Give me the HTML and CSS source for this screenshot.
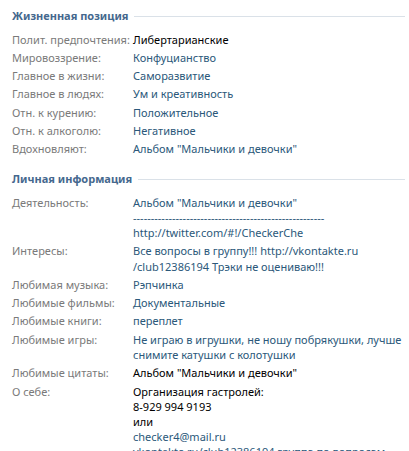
FILE: index.html
```html
<!DOCTYPE html>
<html lang="ru">
<head>
<meta charset="utf-8">
<link rel="stylesheet" href="styles.css">
</head>
<body>
<div class="profile">
  <section class="block">
    <h2 class="block-title"><span>Жизненная позиция</span></h2>
    <div class="row"><div class="label">Полит. предпочтения:</div><div class="value plain">Либертарианские</div></div>
    <div class="row"><div class="label">Мировоззрение:</div><div class="value">Конфуцианство</div></div>
    <div class="row"><div class="label">Главное в жизни:</div><div class="value">Саморазвитие</div></div>
    <div class="row"><div class="label">Главное в людях:</div><div class="value">Ум и креативность</div></div>
    <div class="row"><div class="label">Отн. к курению:</div><div class="value">Положительное</div></div>
    <div class="row"><div class="label">Отн. к алкоголю:</div><div class="value">Негативное</div></div>
    <div class="row"><div class="label">Вдохновляют:</div><div class="value">Альбом "Мальчики и девочки"</div></div>
  </section>
  <section class="block">
    <h2 class="block-title"><span>Личная информация</span></h2>
    <div class="row"><div class="label">Деятельность:</div><div class="value">Альбом "Мальчики и девочки"<br>------------------------------------------------------<br>http://twitter.com/#!/CheckerChe</div></div>
    <div class="row"><div class="label">Интересы:</div><div class="value">Все вопросы в группу!!! http://vkontakte.ru<br>/club12386194 Трэки не оцениваю!!!</div></div>
    <div class="row"><div class="label">Любимая музыка:</div><div class="value">Рэпчинка</div></div>
    <div class="row"><div class="label">Любимые фильмы:</div><div class="value">Документальные</div></div>
    <div class="row"><div class="label">Любимые книги:</div><div class="value">переплет</div></div>
    <div class="row"><div class="label">Любимые игры:</div><div class="value">Не играю в игрушки, не ношу побрякушки, лучше<br>снимите катушки с колотушки</div></div>
    <div class="row"><div class="label">Любимые цитаты:</div><div class="value plain">Альбом "Мальчики и девочки"</div></div>
    <div class="row"><div class="label">О себе:</div><div class="value plain">Организация гастролей:<br>8-929 994 9193<br>или<br><span class="link">checker4@mail.ru</span><br><span class="link">vkontakte.ru/club12386194 группа по вопросам</span></div></div>
  </section>
</div>
</body>
</html>
```
FILE: styles.css
```css
html, body {
  margin: 0;
  padding: 0;
  background: #fff;
}
body {
  font-family: "Noto Sans", Tahoma, sans-serif;
  font-size: 11px;
  color: #000;
}
.profile {
  padding: 7px 4px 0 12px;
}
.block {
  margin-bottom: 12px;
}
.block-title {
  display: flex;
  align-items: center;
  gap: 6px;
  margin: 0 0 5px 0;
  font-size: 11px;
  font-weight: bold;
  color: #45688e;
  line-height: 18px;
}
.block-title::after {
  content: "";
  flex: 1;
  height: 1px;
  background: #dae1e8;
}
.row {
  display: flex;
  line-height: 15.2px;
  padding: 1.55px 0;
}
.label {
  width: 121px;
  flex: none;
  color: #7a7a7a;
  white-space: nowrap;
}
.value {
  color: #2b587a;
  white-space: nowrap;
}
.value.plain {
  color: #000;
}
.link {
  color: #2b587a;
}
```
